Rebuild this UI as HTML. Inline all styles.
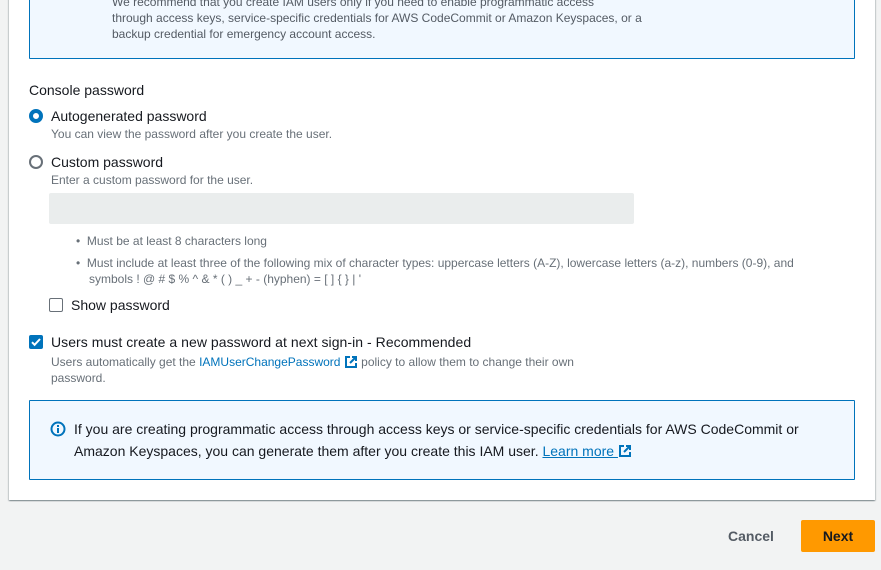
<!DOCTYPE html>
<html><head><meta charset="utf-8"><style>
*{margin:0;padding:0;box-sizing:border-box}
body{width:881px;height:570px;background:#f2f3f3;font-family:"Liberation Sans",sans-serif;color:#16191f;position:relative;overflow:hidden}
.a{position:absolute;white-space:nowrap}
.card{position:absolute;left:9px;top:-5px;width:866px;height:505px;background:#fff;box-shadow:0 1px 1px rgba(0,28,36,.3),1px 1px 1px rgba(0,28,36,.15),-1px 1px 1px rgba(0,28,36,.15)}
.box{position:absolute;background:#f1f8ff;border:1px solid #0073bb;border-radius:1px}
.s{font-size:12px;color:#687078}
.l{font-size:14px;color:#16191f}
a{color:#0073bb;text-decoration:none}
</style></head><body>
<div class="card"></div>
<div class="box" style="left:29px;top:-10px;width:826px;height:69px"></div>
<div class="a s" style="left:112px;top:-6px;line-height:16px;color:#545b64">We recommend that you create IAM users only if you need to enable programmatic access<br>through access keys, service-specific credentials for AWS CodeCommit or Amazon Keyspaces, or a<br>backup credential for emergency account access.</div>

<div class="a l" style="left:29px;top:82px">Console password</div>
<div class="a" style="left:29px;top:109px;width:14px;height:14px;border-radius:50%;border:4px solid #0073bb;background:#fff"></div>
<div class="a l" style="left:51px;top:108px">Autogenerated password</div>
<div class="a s" style="left:51px;top:127px">You can view the password after you create the user.</div>
<div class="a" style="left:29px;top:155px;width:14px;height:14px;border-radius:50%;border:2px solid #687078;background:#fff"></div>
<div class="a l" style="left:51px;top:154px">Custom password</div>
<div class="a s" style="left:51px;top:173px">Enter a custom password for the user.</div>
<div class="a" style="left:49px;top:193px;width:585px;height:31px;background:#eaeded;border-radius:2px"></div>
<div class="a s" style="left:76px;top:234px">•&nbsp;&nbsp;Must be at least 8 characters long</div>
<div class="a s" style="left:76px;top:255px;line-height:16px">•&nbsp;&nbsp;Must include at least three of the following mix of character types: uppercase letters (A-Z), lowercase letters (a-z), numbers (0-9), and<br><span style="padding-left:13px">symbols ! @ # $ % ^ &amp; * ( ) _ + - (hyphen) = [ ] { } | '</span></div>
<div class="a" style="left:49px;top:298px;width:14px;height:14px;border:1px solid #687078;border-radius:2px"></div>
<div class="a l" style="left:71px;top:297px">Show password</div>
<div class="a" style="left:29px;top:335px;width:14px;height:14px;background:#0073bb;border-radius:2px">
<svg width="14" height="14" viewBox="0 0 14 14"><path d="M3 7.2l2.6 2.6L11 4" stroke="#fff" stroke-width="2" fill="none"/></svg></div>
<div class="a l" style="left:51px;top:334px;letter-spacing:.05px">Users must create a new password at next sign-in - Recommended</div>
<div class="a s" style="left:51px;top:354px;line-height:16px">Users automatically get the <a>IAMUserChangePassword</a> <svg width="14" height="14" viewBox="0 0 14 14" style="vertical-align:-3px"><path d="M6 2H2v10h10V8M8 2h4v4M12 2L6 8" stroke="#0073bb" stroke-width="2" fill="none"/></svg> policy to allow them to change their own<br>password.</div>

<div class="box" style="left:29px;top:400px;width:826px;height:80px"></div>
<svg class="a" style="left:50px;top:421px" width="16" height="16" viewBox="0 0 16 16"><circle cx="8" cy="8" r="6.5" stroke="#0073bb" stroke-width="2" fill="none"/><path d="M8 7v5M8 4v2" stroke="#0073bb" stroke-width="2"/></svg>
<div class="a" style="left:74px;top:418px;font-size:14px;line-height:22px">If you are creating programmatic access through access keys or service-specific credentials for AWS CodeCommit or<br>Amazon Keyspaces, you can generate them after you create this IAM user. <a style="text-decoration:underline">Learn more </a><svg width="14" height="14" viewBox="0 0 14 14" style="vertical-align:-2px"><path d="M6 2H2v10h10V8M8 2h4v4M12 2L6 8" stroke="#0073bb" stroke-width="2" fill="none"/></svg></div>

<div class="a" style="left:728px;top:528px;font-size:14px;font-weight:bold;color:#545b64">Cancel</div>
<div class="a" style="left:801px;top:520px;width:74px;height:32px;background:#ff9900;border-radius:2px;font-size:14px;font-weight:bold;color:#16191f;text-align:center;line-height:32px">Next</div>
</body></html>
